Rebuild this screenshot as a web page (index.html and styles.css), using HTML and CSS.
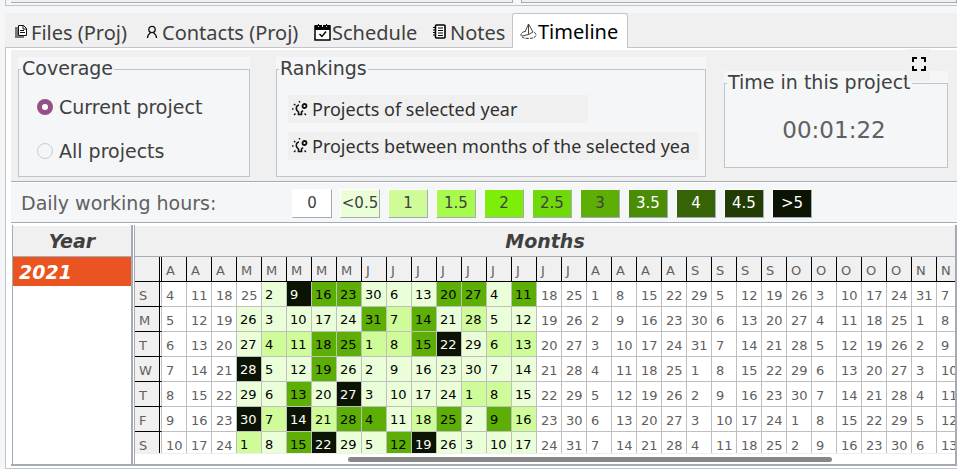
FILE: index.html
```html
<!DOCTYPE html>
<html lang="en">
<head>
<meta charset="utf-8">
<title>Timeline</title>
<link rel="stylesheet" href="styles.css">
</head>
<body>
<div class="upper-panes"><div class="pane"></div><div class="pane"></div></div>
<main class="notebook">
  <nav class="tabs" role="tablist">
    <button class="tab tab-files" role="tab"><svg width="12" height="15" viewBox="0 0 12 15"><path d="M0 3h3v9h6v2H0z" fill="#777"/><path d="M3.500 1.500h5l3 3v7h-8z" fill="#fff" stroke="#111"/><path d="M8 1v4h4M5 6.500h4M5 8.500h5" fill="none" stroke="#111"/></svg>Files (Proj)</button>
    <button class="tab tab-contacts" role="tab"><svg width="12" height="14" viewBox="0 0 12 14"><circle cx="6" cy="4.500" r="3.200" fill="none" stroke="#111" stroke-width="1.300"/><path d="M1.500 13c0-3 1-4 3-5M10.500 13c0-3-1-4-3-5" fill="none" stroke="#111" stroke-width="1.300"/></svg>Contacts (Proj)</button>
    <button class="tab tab-schedule" role="tab"><svg width="17" height="18" viewBox="0 0 17 18"><path d="M1 3h15v14H1z" fill="#fff" stroke="#000" stroke-width="1.500"/><path d="M1 2h15v5H1z"/><path d="M4.500 0v4M8.500 0v4M12.500 0v4" stroke="#eee"/><path d="M4.500 1v2M12.500 1v2" stroke="#000"/><path d="M5.500 11l2.500 2.500 4-5" fill="none" stroke="#000" stroke-width="1.500"/></svg>Schedule</button>
    <button class="tab tab-notes" role="tab"><svg width="13" height="15" viewBox="0 0 13 15"><rect x="2.500" y="1" width="9.500" height="13" rx="1" fill="#fff" stroke="#000" stroke-width="1.600"/><path d="M5 4h5M5 6.500h5M5 9h5M5 11.500h5" stroke="#000" stroke-width="1.200"/><path d="M0 3.500h3M0 6h3M0 8.500h3M0 11h3" stroke="#000"/></svg>Notes</button>
    <button class="tab tab-active" role="tab" aria-selected="true"><svg width="17" height="17" viewBox="0 0 17 17"><path d="M5 8.500C2 9 1 10.500 1 12c0 2 3 3.500 7.500 3.500S16 14 16 12c0-1.500-1-2.500-3-3" fill="none" stroke="#333" stroke-dasharray="3 1"/><path d="M8.500 1v10.500L2 13M8.500 1l4.500 8-4.500 2.500M8.500 1L5 9" fill="none" stroke="#444"/></svg>Timeline</button>
  </nav>
  <section class="page">
    <div class="options">
      <div class="group-box coverage">
        <fieldset><legend>Coverage</legend>
          <label class="choice"><input type="radio" name="coverage" checked>Current project</label>
          <label class="choice"><input type="radio" name="coverage">All projects</label>
        </fieldset>
      </div>
      <div class="group-box rankings">
        <fieldset><legend>Rankings</legend>
          <button class="rank rank-year"><svg width="16" height="16" viewBox="0 0 16 16"><path d="M7 4C4.500 4.500 3.500 7 5 9.500L6.500 11v2.500h3V11L11 9.500" fill="none" stroke="#111" stroke-width="1.600"/><circle cx="12.500" cy="5" r="2" fill="none" stroke="#111" stroke-width="1.800"/><path d="M0 8h1.500M2 3l1.300 1.300M7.500 0v1.500M2 14l1.500-1.500M14 14l-1.500-1.500" stroke="#111" stroke-width="1.400"/></svg><span>Projects of selected year</span></button>
          <button class="rank"><svg width="16" height="16" viewBox="0 0 16 16"><path d="M7 4C4.500 4.500 3.500 7 5 9.500L6.500 11v2.500h3V11L11 9.500" fill="none" stroke="#111" stroke-width="1.600"/><circle cx="12.500" cy="5" r="2" fill="none" stroke="#111" stroke-width="1.800"/><path d="M0 8h1.500M2 3l1.300 1.300M7.500 0v1.500M2 14l1.500-1.500M14 14l-1.500-1.500" stroke="#111" stroke-width="1.400"/></svg><span>Projects between months of the selected yea</span></button>
        </fieldset>
      </div>
      <div class="group-box elapsed">
        <fieldset><legend>Time in this project</legend><output class="clock">00:01:22</output></fieldset>
        <button class="expand" aria-label="Full screen"><svg width="14" height="14" viewBox="0 0 14 14"><path d="M1 5V1h4M9 1h4v4M13 9v4H9M5 13H1V9" fill="none" stroke="#000" stroke-width="2"/></svg></button>
      </div>
    </div>
    <div class="scale">
      <span class="scale-title">Daily working hours:</span>
      <span class="chip h0">0</span><span class="chip h05">&lt;0.5</span><span class="chip h1">1</span><span class="chip h15">1.5</span><span class="chip h2">2</span><span class="chip h25">2.5</span><span class="chip h3">3</span><span class="chip h35">3.5</span><span class="chip h4">4</span><span class="chip h45">4.5</span><span class="chip h5">&gt;5</span>
    </div>
    <div class="calendar">
      <section class="years">
        <h2>Year</h2>
        <button class="year">2021</button>
      </section>
      <section class="months">
        <h2>Months</h2>
        <div class="viewport"><table class="days"><thead></thead><tbody></tbody></table></div>
        <div class="scrollbar"><div class="thumb"></div></div>
      </section>
    </div>
  </section>
</main>
<script src="calendar.js"></script>
</body>
</html>
```
FILE: calendar.js
```js
// One string per weekday, one letter per week, starting on 4 April 2021.
// "." no work, a: under 0.5 h, b: 1 h, c: 3 h, d: over 5 h
const hours = [
  "....adccaaaccac",
  "...aaaaacbcabaa",
  "...abbccbbcdabb",
  "...daacaaaaaaaa",
  "...aacadaaaabba",
  "...dbdbccabcacb",
  "...bacdaacdaaaa"
];
const levels = { a: "h05", b: "h1", c: "h3", d: "h5" };
const weekdays = "SMTWTFS";
const monthInitials = "JFMAMJJASOND";
const weekCount = 32;

function dayOf(week, weekday) {
  return new Date(2021, 3, 4 + week * 7 + weekday);
}

function addCell(row, tag, text, className) {
  const cell = document.createElement(tag);
  cell.textContent = text;
  if (className) cell.className = className;
  row.append(cell);
}

const head = document.querySelector(".days thead").insertRow();
addCell(head, "th", "", "side");
for (let week = 0; week < weekCount; week++) {
  addCell(head, "th", monthInitials[dayOf(week, 6).getMonth()]);
}

const body = document.querySelector(".days tbody");
for (let weekday = 0; weekday < 7; weekday++) {
  const row = body.insertRow();
  addCell(row, "th", weekdays[weekday], "side");
  for (let week = 0; week < weekCount; week++) {
    const level = levels[hours[weekday][week]];
    addCell(row, "td", dayOf(week, weekday).getDate(), level ? "worked " + level : "");
  }
}
```
FILE: styles.css
```css
* { box-sizing: border-box; }
body {
  margin: 0;
  height: 100vh;
  min-height: 469px;
  display: flex;
  flex-direction: column;
  background: #f4f6f8;
  color: #404040;
  font-family: "DejaVu Sans", sans-serif;
  font-size: 19px;
  overflow: hidden;
}
button { border: 0; margin: 0; padding: 0; font: inherit; color: inherit; background: none; text-align: left; }
svg { flex: none; display: block; }

.upper-panes {
  flex: none;
  display: flex;
  gap: 8px;
  height: 6px;
  margin-left: 5px;
  padding: 0 0 2px 5px;
  border-left: 1px solid #c0c4cc;
  border-bottom: 1px solid #c0c4cc;
}
.pane { flex: 503; background: #f0f0f0; border: solid #a5abb4; border-width: 0 1px 1px 0; }
.pane + .pane { flex: 435; border-left-width: 1px; }

.notebook { flex: 1; min-height: 0; display: flex; flex-direction: column; margin: 7px 0 0 5px; }
.tabs {
  flex: none;
  display: flex;
  height: 35px;
  background: #f0f0f0;
  border-bottom: 1px solid #c0c4cc;
  font-family: "Noto Sans", sans-serif;
  font-size: 20px;
}
.tab { display: flex; align-items: center; gap: 4px; height: 34px; padding: 5px 0 0 10px; white-space: nowrap; }
.tab svg { margin-bottom: 2px; }
.tab-files { width: 131px; }
.tab-contacts { width: 168px; }
.tab-schedule { width: 119px; gap: 1px; }
.tab-notes { width: 89px; }
.tab-active {
  width: 116px;
  height: 35px;
  gap: 1px;
  padding: 0 0 0 7px;
  color: #000;
  background: #fff;
  border: 1px solid #c0c4cc;
  border-bottom: 0;
  border-radius: 3px 3px 0 0;
}
.tab-active svg { margin-bottom: 0; }

.page {
  flex: 1;
  min-height: 0;
  display: flex;
  flex-direction: column;
  padding: 2px 0 0 5px;
  background: #fff;
  border-left: 1px solid #c0c4cc;
  border-bottom: 1px solid #c0c4cc;
}
.options {
  flex: none;
  display: flex;
  height: 132px;
  padding: 7px 9px 4px 7px;
  background: #f0f0f0;
  border-bottom: 1px solid #a5abb4;
}
.group-box { height: 120px; background: #f4f6f8; }
.coverage { flex: 232; min-width: 0; margin-right: 26px; }
.rankings { flex: 430; min-width: 0; margin-right: 18px; }
.elapsed { flex: 224; min-width: 0; height: 97px; margin-top: 14px; position: relative; }
fieldset { height: 100%; min-width: 0; margin: 0; padding: 12px 0 0; border: 1px solid #c0c4cc; }
legend { margin-left: 2px; padding: 0 1px 2px; line-height: 22px; white-space: nowrap; }

.choice { display: flex; align-items: center; gap: 6px; height: 28px; margin-left: 18px; }
.coverage .choice { margin-bottom: 16px; }
.choice input {
  appearance: none;
  flex: none;
  width: 16px;
  height: 16px;
  margin: 0;
  border: 1px solid #c8ccd2;
  border-radius: 50%;
}
.choice input:checked { border: 5px solid #975085; background: #fff; }

.rank {
  display: flex;
  align-items: center;
  gap: 4px;
  height: 28px;
  margin: 2px 6px 9px 11px;
  padding-left: 4px;
  width: calc(100% - 17px);
  overflow: hidden;
  white-space: nowrap;
  background: #f0f0f0;
  font-family: "Noto Sans", sans-serif;
  font-size: 18px;
  color: #303030;
}
.rank + .rank { margin-top: 0; }
.rank-year { width: 70%; }

.clock { display: block; margin-top: 8px; padding-right: 4px; text-align: center; font-size: 23px; line-height: 30px; color: #606060; }
.expand {
  position: absolute;
  top: -22px;
  right: 18px;
  display: flex;
  justify-content: center;
  width: 23px;
  height: 32px;
  padding-top: 8px;
  background: #f0f0f0;
}

.scale {
  flex: none;
  display: flex;
  align-items: center;
  gap: 8px;
  height: 41px;
  padding: 2px 0 0 10px;
  background: #f4f6f8;
  border-top: 1px solid #fff;
  border-bottom: 1px solid #a5abb4;
}
.scale-title { width: 263px; margin-top: -2px; color: #606060; }
.chip {
  width: 40px;
  height: 29px;
  border: solid;
  border-width: 1px;
  border-color: #fff #a5abb4 #a5abb4 #fff;
  font-size: 15px;
  line-height: 27px;
  text-align: center;
  white-space: nowrap;
}
.h0 { background: #fff; }
.h05 { background: #eaffd8; }
.h1 { background: #cffb98; }
.h15 { background: #a7fb4c; }
.h2 { background: #7cee0a; }
.h25 { background: #70d90a; }
.h3 { background: #5daf05; }
.h35 { background: #4b8c06; color: #fff; }
.h4 { background: #356305; color: #fff; }
.h45 { background: #213d04; color: #fff; }
.h5 { background: #0b1402; color: #fff; }

.calendar { flex: 1; min-height: 0; display: flex; padding: 2px 0 0 1px; margin-bottom: 2px; border-bottom: 2px solid #a5abb4; }
.years { width: 121px; border: solid #a5abb4; border-width: 0 2px 0 1px; }
.months { flex: 1; min-width: 0; display: flex; flex-direction: column; margin-left: 1px; border: solid #a5abb4; border-width: 0 2px 0 1px; }
h2 {
  flex: none;
  height: 32px;
  margin: 0;
  background: #f0f0f0;
  border-top: 1px solid #fff;
  border-bottom: 1px solid #a5abb4;
  font-size: 19px;
  line-height: 31px;
  font-style: italic;
  text-align: center;
}
.year {
  display: block;
  width: 100%;
  height: 29px;
  padding-left: 6px;
  background: #e95420;
  color: #fff;
  font-weight: bold;
  font-style: italic;
}

.viewport { flex: 1; min-height: 0; overflow: hidden; border-bottom: 1px solid #eee; }
.days { width: max-content; border-spacing: 0; table-layout: fixed; font-size: 13px; color: #606060; }
.days th, .days td {
  width: 25px;
  min-width: 25px;
  height: 25px;
  padding: 4px 0 0 4px;
  border: solid #bfbfbf;
  border-width: 0 1px 1px 0;
  font-weight: normal;
  line-height: 20px;
  text-align: left;
}
.days thead th { background: #f0f0f0; border-color: #000; }
.days .side {
  width: 27px;
  min-width: 27px;
  background: #f0f0f0;
  border-bottom-color: #000;
  box-shadow: inset -1px 0 #fff, inset -2px 0 #000;
}
.days .worked { padding: 2px 0 0 3px; color: #000; }
.days .worked.h5 { color: #fff; }
.scrollbar { flex: none; height: 10px; padding-top: 3px; }
.thumb { width: 59%; height: 5px; margin-left: 26%; border-radius: 3px; background: #888; }
```
